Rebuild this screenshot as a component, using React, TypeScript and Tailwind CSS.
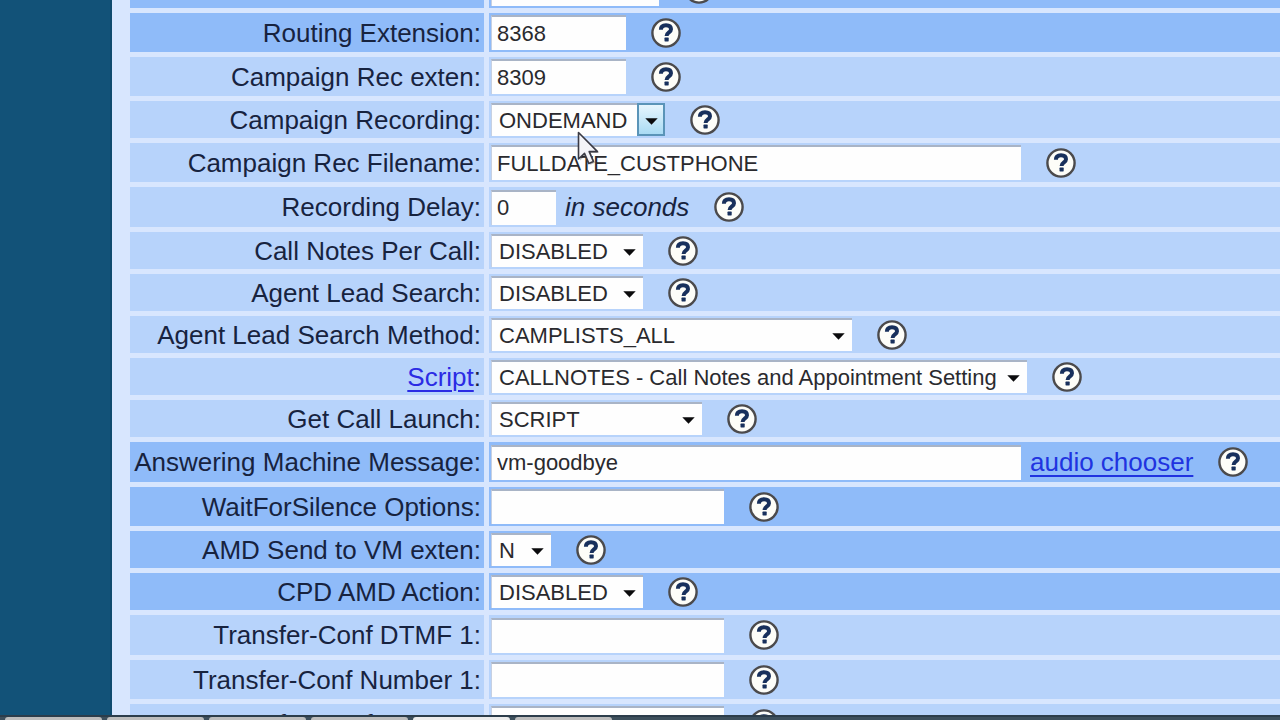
import type { ReactNode } from "react";

type Tone = "light" | "dark";

function HelpIcon({ topic }: { topic: string }) {
  return (
    <a href="#help" aria-label={`Help: ${topic}`} className="ml-[25px] block shrink-0">
      <svg width="30" height="30" viewBox="0 0 30 30" aria-hidden="true">
        <circle cx="15" cy="15" r="13.6" fill="#fdfdf8" stroke="#4b4a4c" strokeWidth="2.4" />
        <path
          d="M9.9 11.8C9.9 8.4 12.2 7.2 15 7.2C18.2 7.2 20 8.8 20 11.3C20 14.6 15.6 14.2 15.6 18"
          fill="none"
          stroke="#18305c"
          strokeWidth="4"
        />
        <rect x="13.5" y="19.6" width="4.2" height="3.8" rx="0.6" fill="#18305c" />
      </svg>
    </a>
  );
}

function Row({
  label,
  id,
  tone = "light",
  height = "h-[39px]",
  href,
  children,
}: {
  label: string;
  id: string;
  tone?: Tone;
  height?: string;
  href?: string;
  children: ReactNode;
}) {
  const bg = tone === "dark" ? "bg-[#8fbbf9]" : "bg-[#b7d3fb]";
  return (
    <div className={`grid grid-cols-[354px_1fr] gap-[5px] ${height}`}>
      <div className={`flex items-center justify-end whitespace-nowrap pr-[3px] leading-[30px] ${bg}`}>
        <label htmlFor={id}>
          {href ? (
            <a href={href} className="text-[#2b2be4] underline decoration-2 underline-offset-4">
              {label}
            </a>
          ) : (
            label
          )}
          :
        </label>
      </div>
      <div className={`flex items-center pl-[2px] ${bg}`}>
        {children}
        <HelpIcon topic={label} />
      </div>
    </div>
  );
}

function TextBox({ id, value = "", width }: { id: string; value?: string; width: string }) {
  return (
    <input
      id={id}
      type="text"
      defaultValue={value}
      className={`h-[35px] shrink-0 border-t-2 border-l border-t-[#a9b4c6] border-l-[#c6d0e2] bg-[#fefefe] pl-[5px] text-[22px] leading-[28px] text-[#2a2a2e] outline-none ${width}`}
    />
  );
}

function Select({
  id,
  value,
  width,
  hovered = false,
}: {
  id: string;
  value: string;
  width: string;
  hovered?: boolean;
}) {
  return (
    <div className={`relative shrink-0 ${width}`}>
      <select
        id={id}
        defaultValue={value}
        className="block h-[33px] w-full appearance-none border-t-2 border-l border-t-[#a9b4c6] border-l-[#c6d0e2] bg-[#fefefe] pt-px pl-[7px] text-[22px] leading-[28px] text-[#2a2a2e] outline-none"
      >
        <option>{value}</option>
      </select>
      <span
        className={`pointer-events-none absolute inset-y-0 right-0 flex w-[28px] items-center justify-center ${
          hovered ? "border-2 border-[#5a94b8] bg-linear-to-b from-[#e6f5fd] to-[#a9dbf4]" : ""
        }`}
      >
        <svg width="13" height="7" viewBox="0 0 13 7" className="mt-1" aria-hidden="true">
          <path d="M0.3 0.3H12.7L6.5 6.8Z" fill="#0b0b0d" />
        </svg>
      </span>
    </div>
  );
}

function Pointer() {
  return (
    <svg
      className="pointer-events-none absolute top-[28px] left-[86px] z-10"
      width="24"
      height="36"
      viewBox="0 0 24 36"
      aria-hidden="true"
    >
      <path
        d="M1.5 1.5V28L7.5 22.4L11.8 32.4L16.4 30.4L12.2 20.6H20.5Z"
        transform="translate(1.6 1.4)"
        fill="#000"
        opacity="0.25"
      />
      <path
        d="M1.5 1.5V28L7.5 22.4L11.8 32.4L16.4 30.4L12.2 20.6H20.5Z"
        fill="#f4f4f8"
        stroke="#3a3a44"
        strokeWidth="1.6"
        strokeLinejoin="round"
      />
    </svg>
  );
}

const SELECT_ROW = "h-[37px]";
const TALL_ROW = "h-[40px]";

export default function App() {
  return (
    <div className="flex h-screen flex-col overflow-hidden bg-[#d8e6fe] font-['Liberation_Sans',Arial,sans-serif] text-[26px] text-[#17233f]">
      <div className="flex min-h-0 flex-1">
        <aside className="w-28 shrink-0 border-r-2 border-[#0f4a6e] bg-[#125278]" />
        <main className="min-w-0 flex-1 overflow-hidden pl-[18px]">
          <form className="-mt-[31px] flex flex-col gap-[5px]">
            <Row label="Park Extension" id="park" tone="dark">
              <TextBox id="park" width="w-[168px]" />
            </Row>
            <Row label="Routing Extension" id="routing" tone="dark">
              <TextBox id="routing" value="8368" width="w-[135px]" />
            </Row>
            <Row label="Campaign Rec exten" id="rec-exten">
              <TextBox id="rec-exten" value="8309" width="w-[135px]" />
            </Row>
            <Row label="Campaign Recording" id="recording" height={SELECT_ROW}>
              <div className="relative">
                <Select id="recording" value="ONDEMAND" width="w-[174px]" hovered />
                <Pointer />
              </div>
            </Row>
            <Row label="Campaign Rec Filename" id="filename">
              <TextBox id="filename" value="FULLDATE_CUSTPHONE" width="w-[530px]" />
            </Row>
            <Row label="Recording Delay" id="delay" height={TALL_ROW}>
              <TextBox id="delay" value="0" width="w-[65px]" />
              <i className="ml-[9px] leading-[30px] whitespace-nowrap">in seconds</i>
            </Row>
            <Row label="Call Notes Per Call" id="notes" height={SELECT_ROW}>
              <Select id="notes" value="DISABLED" width="w-[152px]" />
            </Row>
            <Row label="Agent Lead Search" id="lead-search" height={SELECT_ROW}>
              <Select id="lead-search" value="DISABLED" width="w-[152px]" />
            </Row>
            <Row label="Agent Lead Search Method" id="search-method" height={SELECT_ROW}>
              <Select id="search-method" value="CAMPLISTS_ALL" width="w-[361px]" />
            </Row>
            <Row label="Script" id="script" height={SELECT_ROW} href="#script">
              <Select
                id="script"
                value="CALLNOTES - Call Notes and Appointment Setting"
                width="w-[536px]"
              />
            </Row>
            <Row label="Get Call Launch" id="launch" height={SELECT_ROW}>
              <Select id="launch" value="SCRIPT" width="w-[211px]" />
            </Row>
            <Row label="Answering Machine Message" id="machine" tone="dark" height={TALL_ROW}>
              <TextBox id="machine" value="vm-goodbye" width="w-[530px]" />
              <a
                href="#audio"
                className="ml-[9px] leading-[30px] whitespace-nowrap text-[#2033e0] underline decoration-2 underline-offset-4"
              >
                audio chooser
              </a>
            </Row>
            <Row label="WaitForSilence Options" id="silence" tone="dark">
              <TextBox id="silence" width="w-[233px]" />
            </Row>
            <Row label="AMD Send to VM exten" id="amd" tone="dark" height={SELECT_ROW}>
              <Select id="amd" value="N" width="w-[60px]" />
            </Row>
            <Row label="CPD AMD Action" id="cpd" tone="dark" height={SELECT_ROW}>
              <Select id="cpd" value="DISABLED" width="w-[152px]" />
            </Row>
            <Row label="Transfer-Conf DTMF 1" id="dtmf1" height={TALL_ROW}>
              <TextBox id="dtmf1" width="w-[233px]" />
            </Row>
            <Row label="Transfer-Conf Number 1" id="number1">
              <TextBox id="number1" width="w-[233px]" />
            </Row>
            <Row label="Transfer-Conf DTMF 2" id="dtmf2">
              <TextBox id="dtmf2" width="w-[233px]" />
            </Row>
          </form>
        </main>
      </div>
      <footer className="flex h-[5px] shrink-0 gap-[5px] border-t-2 border-[#2c3d4b] bg-[#3d4f5c] pl-[5px]">
        {[0, 1, 2, 3, 4, 5].map((tab) => (
          <span
            key={tab}
            className={`w-[97px] rounded-t-sm ${tab === 4 ? "bg-[#ececec]" : "bg-[#bdbdbd]"}`}
          />
        ))}
      </footer>
    </div>
  );
}
